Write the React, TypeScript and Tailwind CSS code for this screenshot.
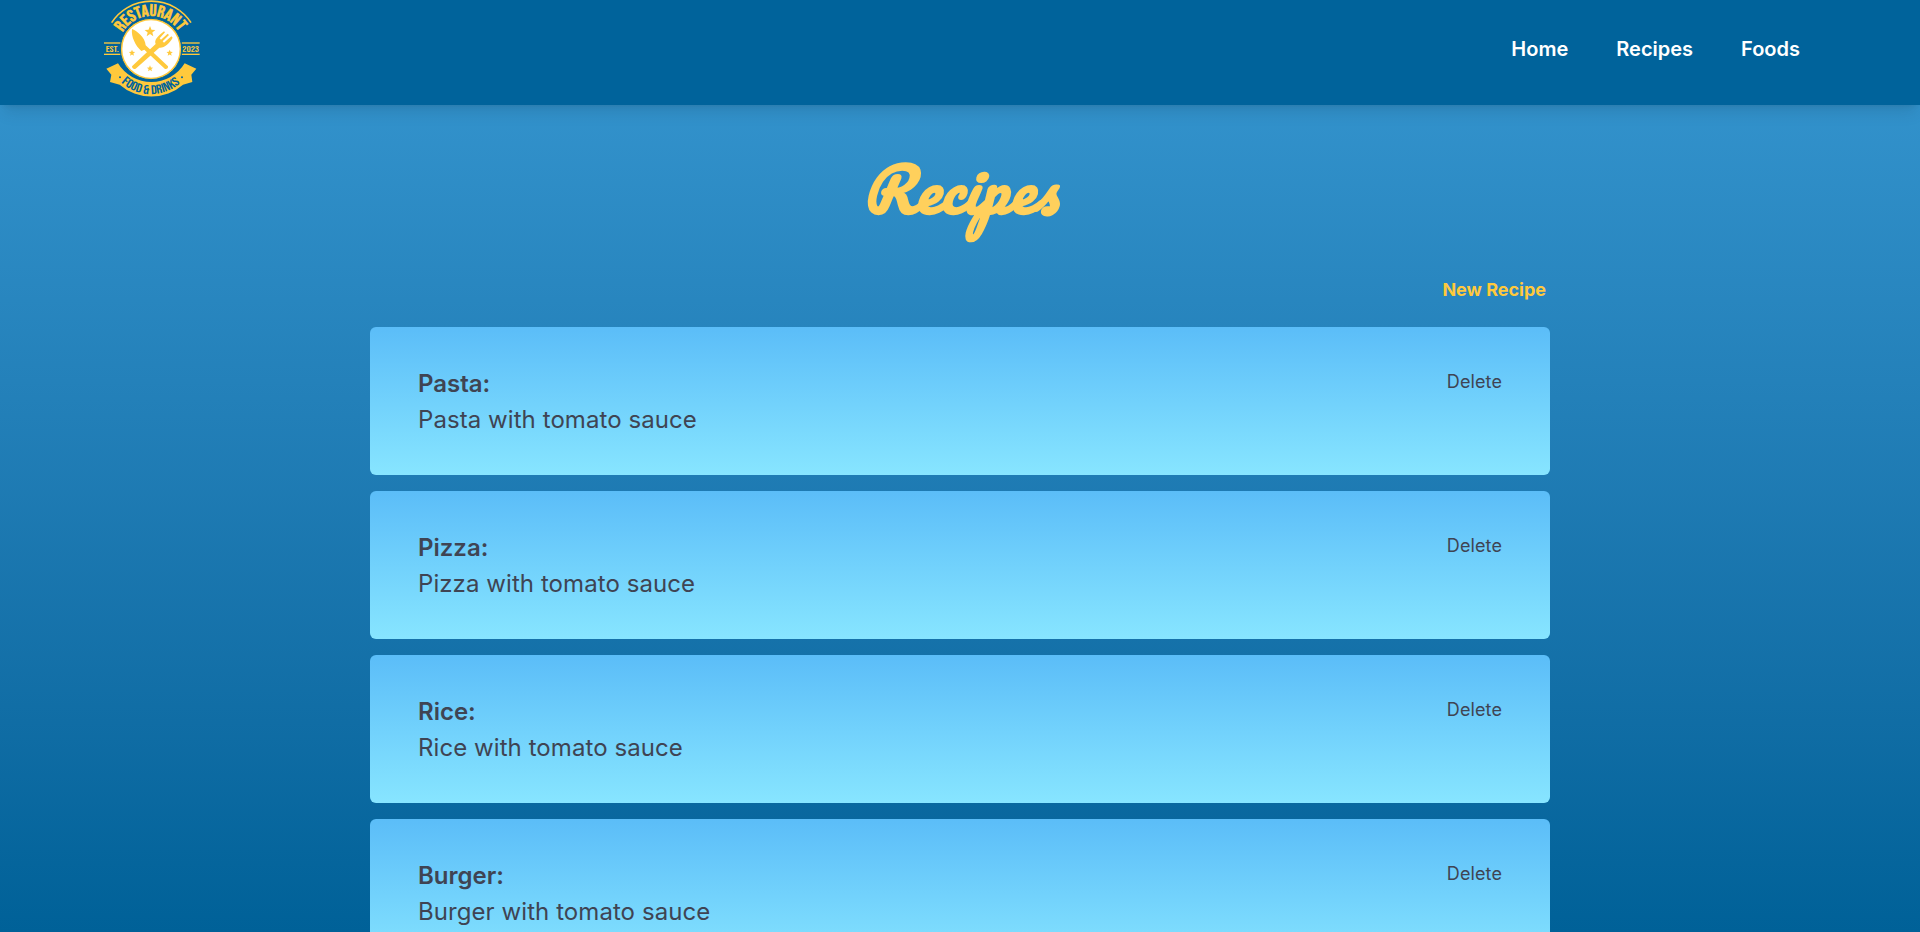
const recipes = [
  { name: "Pasta", description: "Pasta with tomato sauce" },
  { name: "Pizza", description: "Pizza with tomato sauce" },
  { name: "Rice", description: "Rice with tomato sauce" },
  { name: "Burger", description: "Burger with tomato sauce" },
];

const STAR =
  "M0 -10 L2.6 -3.4 L9.5 -3.1 L4.1 1.3 L5.9 8.1 L0 4.2 L-5.9 8.1 L-4.1 1.3 L-9.5 -3.1 L-2.6 -3.4 Z";

const LOGO_FONT = "'Bebas Neue', Oswald, 'Liberation Sans', sans-serif";

function Logo() {
  return (
    <svg viewBox="42 0 288 294" className="h-[98px] w-24" role="img" aria-label="Restaurant">
      <defs>
        <path id="arc-top" d="M98 97 A98 98 0 0 1 268 97" />
        <path id="arc-bottom" d="M92 246 A132 132 0 0 0 274 246" />
      </defs>
      <path d="M65 68 A142 142 0 0 1 303 68" fill="none" stroke="#ffc93c" strokeWidth="5" />
      <g fill="#ffc93c">
        <rect x="42" y="127" width="50" height="4" />
        <rect x="42" y="161" width="50" height="4" />
        <rect x="275" y="127" width="54" height="4" />
        <rect x="275" y="161" width="54" height="4" />
      </g>
      <text fill="#ffc93c" stroke="#ffc93c" strokeWidth="1.6" fontFamily={LOGO_FONT} fontSize="50">
        <textPath href="#arc-top" textLength="202" lengthAdjust="spacingAndGlyphs">RESTAURANT</textPath>
      </text>
      <g fill="#ffc93c" fontFamily={LOGO_FONT} fontSize="25">
        <text x="47" y="155" textLength="39" lengthAdjust="spacingAndGlyphs">EST.</text>
        <text x="277" y="155" textLength="50" lengthAdjust="spacingAndGlyphs">2023</text>
      </g>
      <path
        d="M49 206 L84 190 A117 117 0 0 0 284 190 L319 206 L304 224 L307 246 L279 254 A144 144 0 0 1 89 254 L60 246 L64 224 Z"
        fill="#ffc93c"
      />
      <circle cx="183" cy="147" r="92" fill="#ffc93c" stroke="#00639b" strokeWidth="3" />
      <circle cx="183" cy="147" r="86" fill="#fff" />
      <g fill="#ffc93c">
        <path d={STAR} transform="translate(180 95) scale(1.7)" />
        <path d={STAR} transform="translate(126 159)" />
        <path d={STAR} transform="translate(239 159)" />
        <path d={STAR} transform="translate(180 206)" />
        <path d="M126 87 C139 91 166 112 167 136 L234 199 Q235 208 225 207 L163 149 L154 153 C136 137 123 110 126 87 Z" />
        <path d="M126 199 L197 132 C192 121 201 111 222 94 L225 97 L209 115 L213 119 L233 101 L237 105 L218 124 L222 128 L244 109 L248 113 C239 130 222 145 208 143 L137 206 Q126 210 126 199 Z" />
      </g>
      <g fill="#00639b">
        <circle cx="90" cy="232" r="3" />
        <circle cx="276" cy="232" r="3" />
        <text fontFamily={LOGO_FONT} fontSize="38">
          <textPath href="#arc-bottom" startOffset="2" textLength="194" lengthAdjust="spacingAndGlyphs">
            FOOD &amp; DRINKS
          </textPath>
        </text>
      </g>
    </svg>
  );
}

export default function App() {
  return (
    <div className="flex h-[932px] flex-col overflow-hidden bg-linear-to-b from-[#3798d2] to-[#006198] font-[Inter,sans-serif]">
      <header className="relative flex h-[105px] shrink-0 items-start justify-between bg-[#00639b] pr-[120px] pl-[104px] shadow-lg">
        <Logo />
        <nav className="flex h-[98px] items-center gap-12 text-xl font-semibold text-white">
          <a href="#home">Home</a>
          <a href="#recipes">Recipes</a>
          <a href="#foods">Foods</a>
        </nav>
      </header>
      <main className="mx-auto flex w-[1180px] flex-col">
        <h1 className="mt-9 flex h-24 items-center justify-center font-[Pacifico,Lobster,cursive] text-6xl leading-none font-bold tracking-[1.2px] text-[#ffd05c] italic [font-feature-settings:'liga','clig','calt']">
          Recipes
        </h1>
        <div className="mt-[39px] mb-[23px] flex justify-end pr-1">
          <button className="text-lg font-bold text-[#ffc93c]">New Recipe</button>
        </div>
        <ul className="flex flex-col gap-4">
          {recipes.map((recipe) => (
            <li
              key={recipe.name}
              className="flex h-[148px] items-start justify-between rounded-md bg-linear-to-b from-[#5bbdf8] to-[#87e5ff] px-12 py-[39px] text-[#3f4453]"
            >
              <div className="text-2xl leading-9">
                <h2 className="font-semibold">{recipe.name}:</h2>
                <p className="tracking-[0.003em]">{recipe.description}</p>
              </div>
              <button className="mt-0.5 text-lg tracking-[0.006em]">Delete</button>
            </li>
          ))}
        </ul>
      </main>
    </div>
  );
}
